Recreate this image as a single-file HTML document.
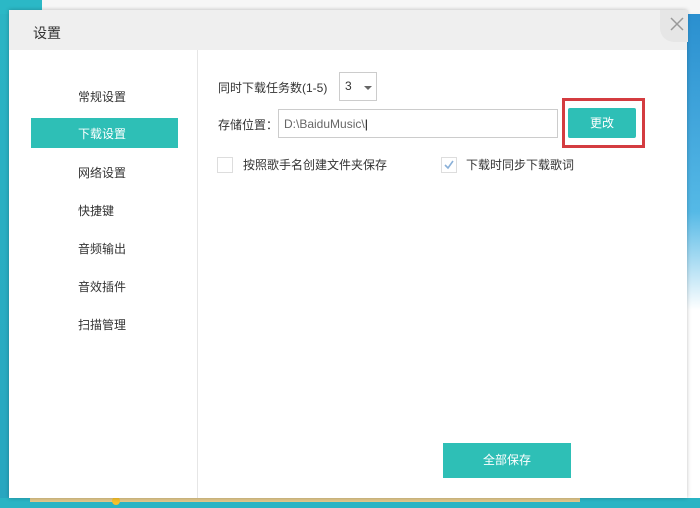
<!DOCTYPE html>
<html><head><meta charset="utf-8"><style>
*{margin:0;padding:0;box-sizing:border-box}
body{width:700px;height:508px;overflow:hidden;position:relative;background:#f4f4f4;font-family:"Liberation Sans","Noto Sans CJK SC",sans-serif;font-size:12px;color:#333}
.abs{position:absolute}
</style></head><body>
<div class="abs" style="left:0;top:0;width:42px;height:508px;background:linear-gradient(#2bb5c4,#28a6c0)"></div>
<div class="abs" style="left:0;top:0;width:700px;height:12px;background:#f6f6f6"></div>
<div class="abs" style="left:0;top:0;width:42px;height:14px;background:#2bb8c6"></div>
<div class="abs" style="left:686px;top:14px;width:14px;height:494px;background:linear-gradient(#2a8fcf,#55b9e6 40%,#ffffff 60%,#fff)"></div>
<div class="abs" style="left:0;top:498px;width:700px;height:10px;background:#2ab4c4"></div>
<div class="abs" style="left:30px;top:498px;width:550px;height:4px;background:#e0c68a"></div>
<div class="abs" style="left:112px;top:497px;width:8px;height:8px;border-radius:50%;background:#f5c02a"></div>
<div class="abs" style="left:9px;top:10px;width:678px;height:488px;background:#fff;box-shadow:0 0 4px rgba(0,0,0,.25)"></div>
<div class="abs" style="left:9px;top:10px;width:678px;height:40px;background:#efefef"></div>
<div class="abs" style="left:33px;top:23px;font-size:14px;color:#333">设置</div>
<div class="abs" style="left:660px;top:10px;width:28px;height:32px;background:#e6e6e6;border-radius:0 0 0 14px"></div>
<svg class="abs" style="left:670px;top:17px" width="14" height="14"><path d="M1 1L13 13M13 1L1 13" stroke="#999" stroke-width="1.5"/></svg>
<div class="abs" style="left:197px;top:50px;width:1px;height:448px;background:#e6e6e6"></div>
<div class="abs" style="left:31px;top:118px;width:147px;height:30px;background:#2ebfb6"></div>
<div class="abs" style="left:78px;top:88px;line-height:18px">常规设置</div>
<div class="abs" style="left:78px;top:125px;line-height:18px;color:#fff">下载设置</div>
<div class="abs" style="left:78px;top:164px;line-height:18px">网络设置</div>
<div class="abs" style="left:78px;top:202px;line-height:18px">快捷键</div>
<div class="abs" style="left:78px;top:240px;line-height:18px">音频输出</div>
<div class="abs" style="left:78px;top:278px;line-height:18px">音效插件</div>
<div class="abs" style="left:78px;top:316px;line-height:18px">扫描管理</div>
<div class="abs" style="left:218px;top:79px;line-height:18px">同时下载任务数(1-5)</div>
<div class="abs" style="left:339px;top:72px;width:38px;height:29px;border:1px solid #ccc"></div>
<div class="abs" style="left:345px;top:78px;line-height:16px">3</div>
<div class="abs" style="left:364px;top:86px;width:0;height:0;border-left:4px solid transparent;border-right:4px solid transparent;border-top:4px solid #666"></div>
<div class="abs" style="left:218px;top:116px;line-height:18px">存储位置：</div>
<div class="abs" style="left:278px;top:109px;width:280px;height:29px;border:1px solid #ccc"></div>
<div class="abs" style="left:284px;top:116px;line-height:16px;color:#666">D:\BaiduMusic\<span style="color:#000">|</span></div>
<div class="abs" style="left:562px;top:98px;width:83px;height:50px;border:3px solid #d43c40"></div>
<div class="abs" style="left:568px;top:108px;width:68px;height:30px;background:#2ebfb6;border-radius:2px;color:#fff;text-align:center;line-height:30px">更改</div>
<div class="abs" style="left:217px;top:157px;width:16px;height:16px;border:1px solid #ddd"></div>
<div class="abs" style="left:243px;top:157px;line-height:16px">按照歌手名创建文件夹保存</div>
<div class="abs" style="left:441px;top:157px;width:16px;height:16px;border:1px solid #ddd"></div>
<svg class="abs" style="left:443px;top:159px" width="12" height="12"><path d="M2 6L5 9L10 2" stroke="#8ab0d8" stroke-width="1.6" fill="none"/></svg>
<div class="abs" style="left:466px;top:157px;line-height:16px">下载时同步下载歌词</div>
<div class="abs" style="left:443px;top:443px;width:128px;height:35px;background:#2ebfb6;color:#fff;text-align:center;line-height:35px">全部保存</div>
</body></html>
